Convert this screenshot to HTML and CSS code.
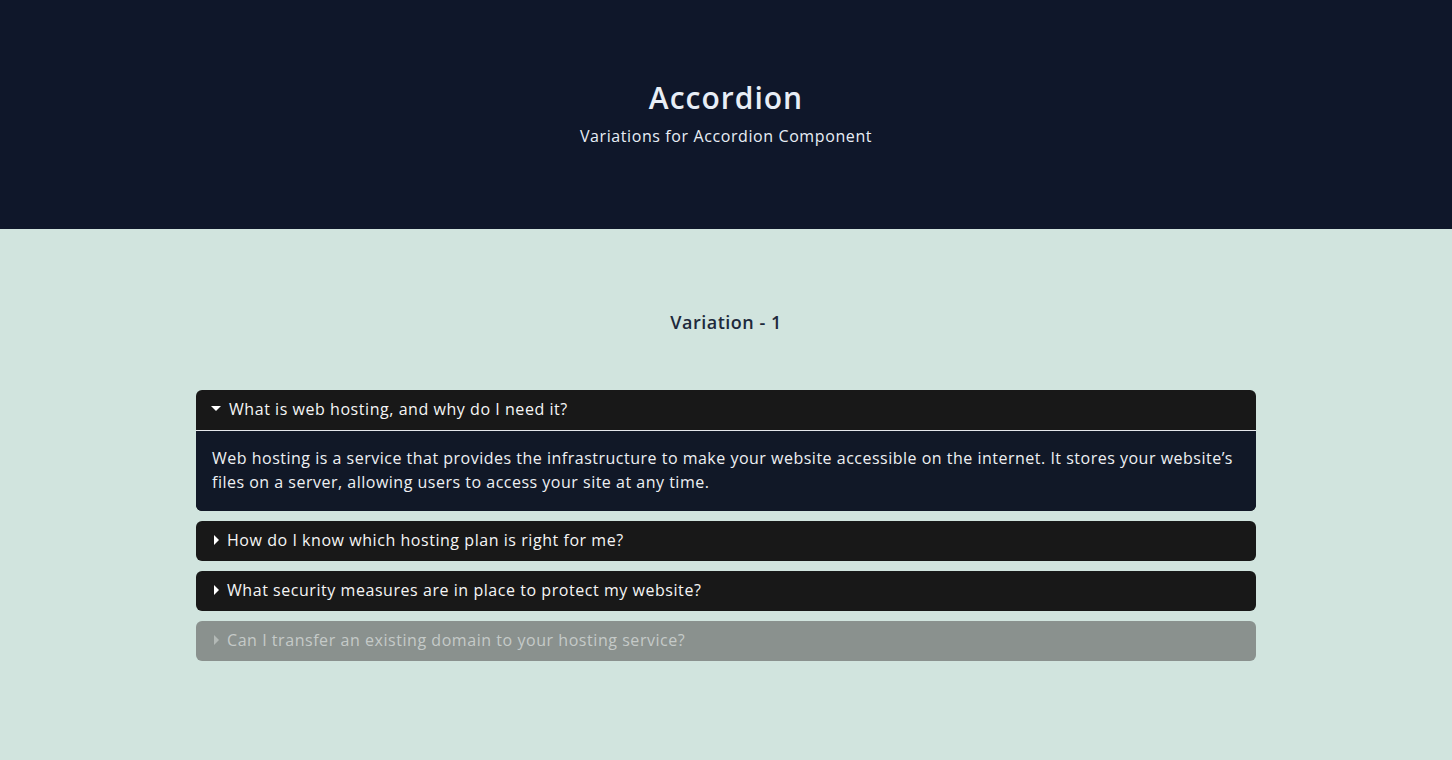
FILE: index.html
```html
<!DOCTYPE html>
<html lang="en">
<head>
<meta charset="utf-8">
<title>Accordion</title>
<link rel="stylesheet" href="styles.css">
</head>
<body>
<header class="hero">
  <h1 class="hero-title">Accordion</h1>
  <p class="hero-sub">Variations for Accordion Component</p>
</header>
<main class="main">
  <h2 class="variation">Variation - 1</h2>
  <div class="accordion">
    <div class="item open">
      <div class="item-head"><span class="caret down"></span><span>What is web hosting, and why do I need it?</span></div>
      <div class="item-body">Web hosting is a service that provides the infrastructure to make your website accessible on the internet. It stores your website’s files on a server, allowing users to access your site at any time.</div>
    </div>
    <div class="item">
      <div class="item-head"><span class="caret right"></span><span>How do I know which hosting plan is right for me?</span></div>
    </div>
    <div class="item">
      <div class="item-head"><span class="caret right"></span><span>What security measures are in place to protect my website?</span></div>
    </div>
    <div class="item disabled">
      <div class="item-head"><span class="caret right"></span><span>Can I transfer an existing domain to your hosting service?</span></div>
    </div>
  </div>
</main>
</body>
</html>
```
FILE: styles.css
```css
* { box-sizing: border-box; }
html, body { margin: 0; padding: 0; }
body {
  font-family: "Open Sans", "Liberation Sans", sans-serif;
  background: #d1e4de;
  min-height: 760px;
}
.hero {
  background: #0f172a;
  height: 229px;
  display: flex;
  flex-direction: column;
  align-items: center;
  padding-top: 78px;
  color: #e8eef6;
}
.hero-title {
  margin: 0;
  font-size: 30px;
  font-weight: 600;
  line-height: 40px;
  letter-spacing: 1px;
}
.hero-sub {
  margin: 0;
  font-size: 16px;
  line-height: 24px;
  margin-top: 6px;
  letter-spacing: 0.6px;
}
.main {
  padding-top: 79px;
  display: flex;
  flex-direction: column;
  align-items: center;
}
.variation {
  margin: 0;
  font-size: 18px;
  font-weight: 600;
  line-height: 28px;
  color: #1e293b;
  letter-spacing: 0.5px;
}
.accordion {
  margin-top: 54px;
  width: 1060px;
  display: flex;
  flex-direction: column;
  gap: 10px;
}
.item {
  border-radius: 6px;
  overflow: hidden;
  background: #181818;
  color: #f5f5f5;
}
.item-head {
  height: 40px;
  display: flex;
  align-items: center;
  padding-left: 16px;
  padding-bottom: 2px;
  font-size: 16px;
  gap: 8px;
  letter-spacing: 0.55px;
}
.item.open .item-head {
  height: 41px;
  padding-left: 15px;
  padding-bottom: 3px;
  border-bottom: 1px solid #e5e7eb;
}
.caret {
  display: inline-block;
  width: 0;
  height: 0;
}
.caret.down {
  border-left: 5px solid transparent;
  border-right: 5px solid transparent;
  border-top: 5px solid #ffffff;
}
.caret.right {
  margin-left: 2px;
  border-top: 5px solid transparent;
  border-bottom: 5px solid transparent;
  border-left: 5px solid #ffffff;
  margin-right: 0;
}
.item-body {
  background: #111827;
  padding: 15px 16px 17px;
  font-size: 16px;
  line-height: 24px;
  color: #eef0f3;
  letter-spacing: 0.5px;
}
.item.disabled {
  background: #8a918e;
  color: #c5cac8;
}
.item.disabled .caret.right {
  border-left-color: #b3b9b6;
}
```
